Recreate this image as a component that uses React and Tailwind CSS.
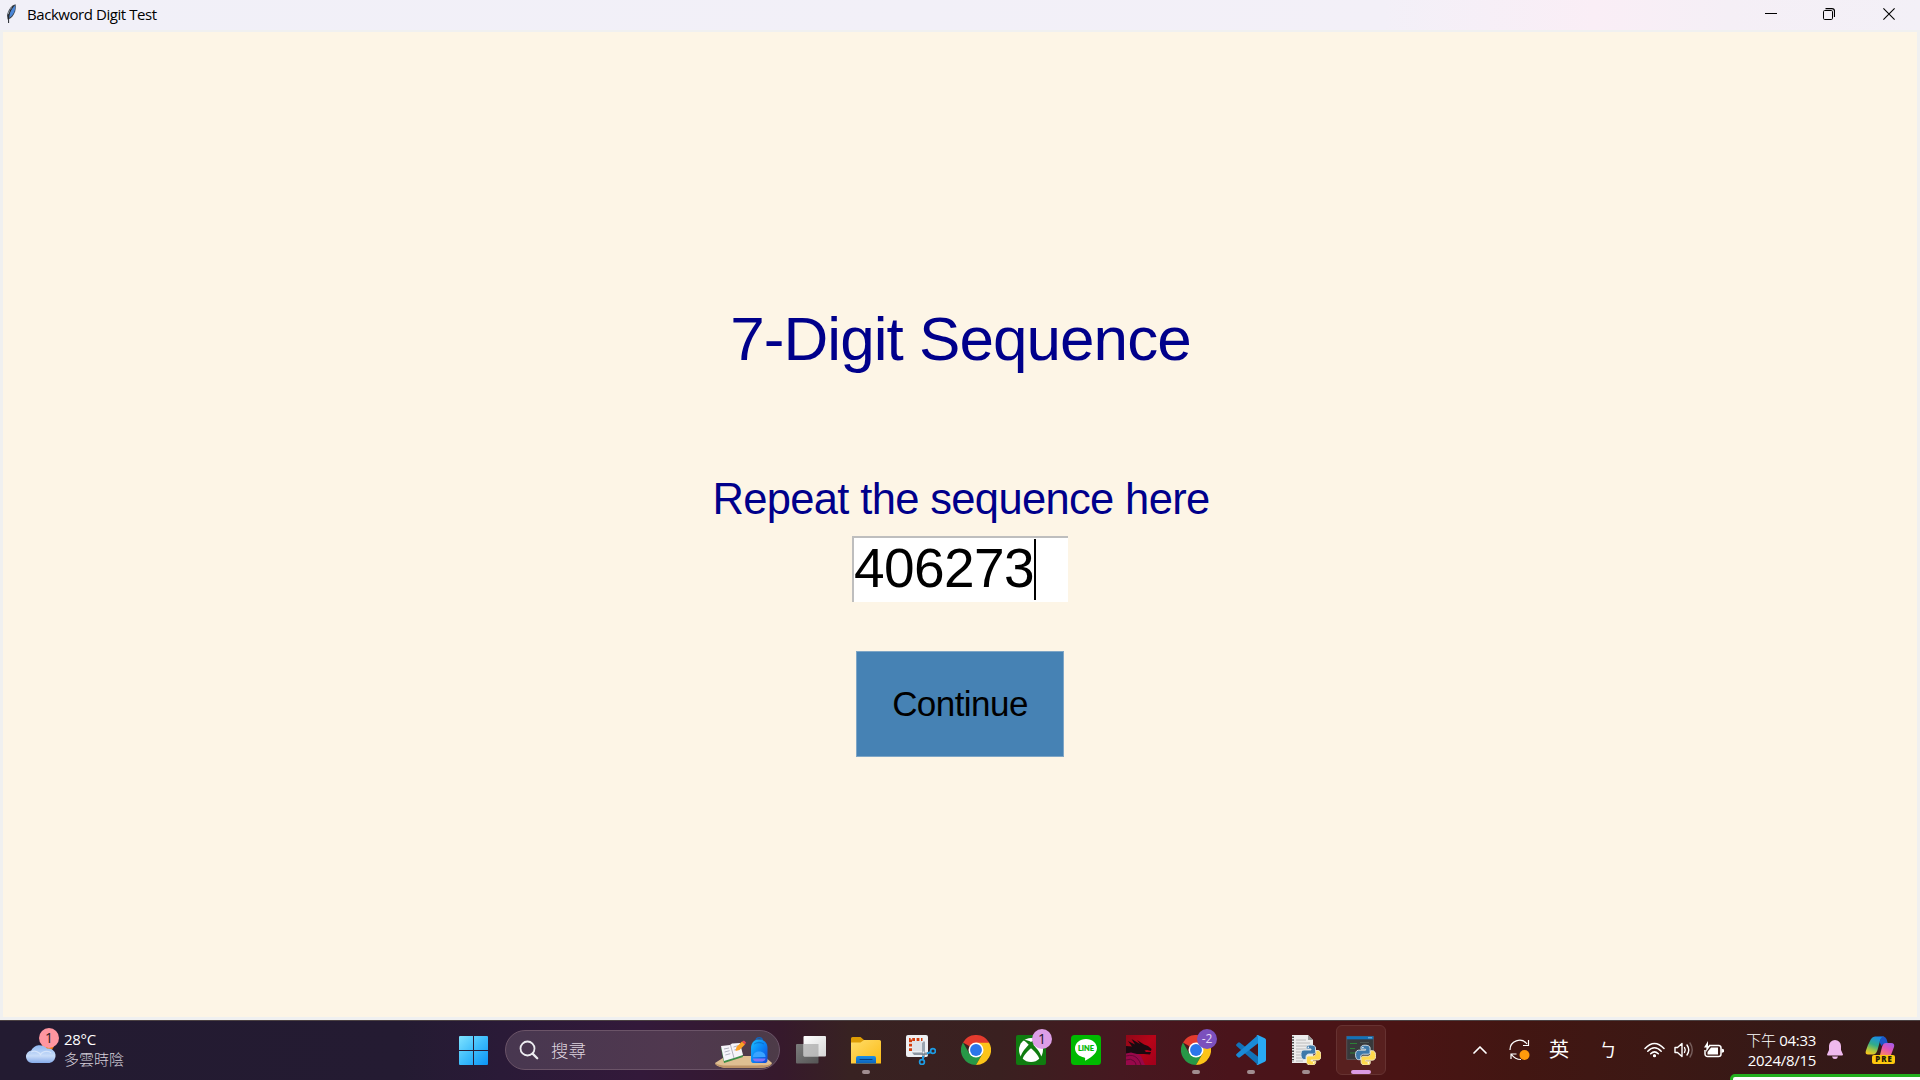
import React from "react";

function Feather() {
  return (
    <svg className="block h-5 w-[11px] shrink-0" viewBox="0 0 11 20">
      <path d="M9.6.3C6 .8 2 5.500 1 11.500L1.600 15.500 4.200 14.500C7.500 12.500 10.600 7 9.600.3Z" fill="#3a4048" />
      <path d="M9.200 1.200C6 4 3.200 9 3 14 6.800 11.500 9.600 7.500 9.200 1.200Z" fill="#4a86d8" />
      <path d="M7 2.500C4 6 2.600 9.500 2.600 14L2.600 19" fill="none" stroke="#22252a" strokeWidth="1" />
      <path d="M3.400 6.500 2.200 10M5.500 3.500 4.300 5.500" stroke="#9aa4b0" strokeWidth="1" />
    </svg>
  );
}

function TitleBar() {
  return (
    <header className="flex h-[30px] items-start bg-[linear-gradient(90deg,#f1f0f8_0%,#f2f0f8_48%,#f3f0f8_72%,#faeef6_83%,#f5eff6_90%,#f3f0f7_100%)]">
      <div className="flex h-[30px] w-[300px] pl-1.5 pt-1">
        <Feather />
        <span className="ml-2.5 whitespace-nowrap font-['Open_Sans','Noto_Sans',sans-serif] text-[15px] leading-[21px] tracking-[-0.44px] text-black">
          Backword Digit Test
        </span>
      </div>
      <div className="ml-auto flex h-7 items-center pr-[3px]">
        <div className="flex w-[58px] justify-center">
          <svg className="h-3 w-3" viewBox="0 0 12 12"><path d="M0 5.500h12" stroke="#000" /></svg>
        </div>
        <div className="flex w-[58px] justify-center">
          <svg className="h-3 w-3" viewBox="0 0 12 12" fill="none" stroke="#000">
            <rect x=".5" y="2.500" width="9" height="9" rx="1.200" />
            <path d="M2.500.6H9a2.500 2.500 0 0 1 2.500 2.500V9" strokeWidth="1.200" />
          </svg>
        </div>
        <div className="flex w-[58px] justify-center pl-1">
          <svg className="h-3 w-3" viewBox="0 0 12 12"><path d="M.4.4 11.600 11.600M11.600.4.4 11.600" stroke="#000" strokeWidth="1.100" /></svg>
        </div>
        <div className="w-[1px]" />
      </div>
    </header>
  );
}

function Cloud() {
  return (
    <svg className="h-[38px] w-9" viewBox="0 0 36 38">
      <defs>
        <linearGradient id="cl" x1="0" y1="0" x2="0" y2="1">
          <stop offset="0" stopColor="#8fb8f2" />
          <stop offset=".6" stopColor="#c9dcf8" />
          <stop offset="1" stopColor="#86abea" />
        </linearGradient>
      </defs>
      <circle cx="23" cy="18" r="6" fill="#f57c10" />
      <path d="M7 36a6.300 6.300 0 0 1-.8-12.500A9.500 9.500 0 0 1 22 21.500 7.300 7.300 0 0 1 24.500 36Z" fill="url(#cl)" />
      <path d="M6 25C10 23 14 25 15.500 27.500 18 23 25 24 26 26" fill="none" stroke="#e3edfc" strokeWidth="1.300" opacity=".7" />
      <circle cx="24" cy="11" r="10" fill="#ff96a0" />
      <text x="24" y="15.800" textAnchor="middle" fontSize="14" fontFamily="Open Sans" fill="#2b1a1e">1</text>
    </svg>
  );
}

function StartIcon() {
  return (
    <svg className="h-[29px] w-[29px]" viewBox="0 0 29 29">
      <defs>
        <linearGradient id="win" x1="0" y1="0" x2="1" y2="1">
          <stop offset="0" stopColor="#7fe3ff" />
          <stop offset=".5" stopColor="#3dbcfb" />
          <stop offset="1" stopColor="#0b93f5" />
        </linearGradient>
      </defs>
      <path fill="url(#win)" d="M1 0h13v14H0V1a1 1 0 0 1 1-1ZM15 0h13a1 1 0 0 1 1 1v13H15ZM0 15h14v14H1a1 1 0 0 1-1-1ZM15 15h14v13a1 1 0 0 1-1 1H15Z" />
    </svg>
  );
}

function SchoolArt() {
  return (
    <svg className="h-[32px] w-[58px]" viewBox="0 0 58 32">
      <defs>
        <linearGradient id="bag" x1="0" y1="0" x2="1" y2="1">
          <stop offset="0" stopColor="#1cc0ff" />
          <stop offset=".5" stopColor="#0b85f5" />
          <stop offset="1" stopColor="#1246d6" />
        </linearGradient>
      </defs>
      <path d="M0 26 11 19H49L57 26C56 29.500 50 31 43 31H14C7 31 1 29.500 0 26Z" fill="#dfbf92" />
      <path d="M0 26C4 29 10 28.500 16 28.500H42C49 28.500 54 28.500 57 26 56 29.500 50 31 43 31H14C7 31 1 29.500 0 26Z" fill="#bd9367" />
      <path d="M6 11 9 26 28 20 25 7Z" fill="#3d8e46" />
      <path d="M6 9 15 8 17 6.500 25 6 28 18 19 21 9 24Z" fill="#f6f5fa" />
      <path d="M15.500 8 19 21M9 12l5-1M9.600 15l5-1.300M10.300 18l5-1.300M18.500 10l5-1.500M19.300 13l5-1.500" stroke="#a9a9b8" strokeWidth=".9" />
      <path d="M20.500 14 21.500 10 27 4.500 30 7.500 24.500 13Z" fill="#fba024" />
      <path d="M27 4.500 29 3.500 31 5.500 30 7.500Z" fill="#ea4a52" />
      <path d="M41 4a3.200 3.200 0 0 1 6.400 0" fill="none" stroke="#1463b8" strokeWidth="1.500" />
      <path d="M36 11C36 5 40 2.500 44.200 2.500S52.500 5 52.500 11V23C52.500 25.500 51 26 49 26H39.500C37 26 36 25.500 36 23Z" fill="url(#bag)" />
      <path d="M39 6.500Q44 3 49 6.500V7.500Q44 5 39 7.500Z" fill="#074c9e" opacity=".4" />
      <path d="M38 20C38 16 41 14.500 44.200 14.500S50.500 16 50.500 20Z" fill="#3aa4ff" />
      <path d="M38 21.500H50.500C50 24 49 24.500 44 24.500S38.500 24 38 21.500Z" fill="#8472f4" />
    </svg>
  );
}

function TaskView() {
  return (
    <svg className="h-[30px] w-[30px]" viewBox="0 0 30 30">
      <defs>
        <linearGradient id="tv1" x1="0" y1="0" x2="1" y2="1"><stop stopColor="#fff" /><stop offset="1" stopColor="#d6d6d6" /></linearGradient>
        <linearGradient id="tv2" x1="0" y1="0" x2="1" y2="1"><stop stopColor="#7c7c7c" /><stop offset="1" stopColor="#555" /></linearGradient>
      </defs>
      <rect x="0" y="9" width="22.500" height="19.500" rx="1" fill="url(#tv2)" />
      <rect x="7.500" y="1" width="22.500" height="20.500" rx="1" fill="url(#tv1)" />
      <path d="M7.500 9H22.500V21.500H8.500a1 1 0 0 1-1-1Z" fill="#a8a8a8" opacity=".7" />
    </svg>
  );
}

function Explorer() {
  return (
    <svg className="h-[30px] w-[30px]" viewBox="0 0 30 30">
      <defs>
        <linearGradient id="fo" x1="0" y1="0" x2="1" y2="1"><stop stopColor="#ffdc6a" /><stop offset="1" stopColor="#fbbb14" /></linearGradient>
        <linearGradient id="fb" x1="0" y1="0" x2="0" y2="1"><stop stopColor="#1c8fe6" /><stop offset="1" stopColor="#0b62ba" /></linearGradient>
      </defs>
      <path d="M0 3.500a1.500 1.500 0 0 1 1.500-1.500H9.500L13 5V9H0Z" fill="#dd9c05" />
      <path d="M0 7.500H9.500L13 5H28.500A1.500 1.500 0 0 1 30 6.500V28.500H0Z" fill="url(#fo)" />
      <path d="M5 28.500V23a2 2 0 0 1 2-2H23a2 2 0 0 1 2 2V28.500Z" fill="url(#fb)" />
      <path d="M9 24.500H21" stroke="#063f82" strokeWidth="1.100" strokeLinecap="round" />
    </svg>
  );
}

function Snip() {
  return (
    <svg className="h-[30px] w-[30px]" viewBox="0 0 30 30">
      <rect x="0" y="0" width="22" height="22" rx="2" fill="#eef0f3" />
      <rect x="6" y="6" width="10" height="10" fill="#dfe3e8" />
      <path d="M4.500 16V4.500H16.500" fill="none" stroke="#d23c0c" strokeWidth="3" strokeDasharray="2.800 1.600" />
      <path d="M18 6 16 8V21L17 24 19 22V7Z" fill="#9ba6b1" />
      <path d="M6 17.500H23L21 20H8Z" fill="#74808c" opacity=".8" />
      <circle cx="17.500" cy="17.500" r="1" fill="#e6eaee" />
      <circle cx="27" cy="16" r="2.400" fill="none" stroke="#1d9ce5" strokeWidth="1.700" />
      <circle cx="16" cy="27" r="2.400" fill="none" stroke="#1d9ce5" strokeWidth="1.700" />
      <path d="M21 18.500 25 17M17 24V21" stroke="#1d9ce5" strokeWidth="1.900" />
    </svg>
  );
}

function Chrome() {
  return (
    <svg className="h-[30px] w-[30px]" viewBox="0 0 48 48">
      <path d="M24 24 3.200 12A24 24 0 0 1 44.800 12Z" fill="#e33b2e" />
      <path d="M3.200 12A24 24 0 0 0 24 48L34.400 30 24 24 13.600 30Z" fill="#279847" />
      <path d="M24 12H44.800A24 24 0 0 1 24 48L34.400 30Z" fill="#fcc419" />
      <path d="M24 12H44.800L42 9H24Z" fill="#e33b2e" />
      <circle cx="24" cy="24" r="12" fill="#fff" />
      <circle cx="24" cy="24" r="9.500" fill="#2b76ea" />
    </svg>
  );
}

function Xbox() {
  return (
    <svg className="h-[30px] w-[30px]" viewBox="0 0 30 30">
      <rect width="30" height="30" rx="2" fill="#107c10" />
      <circle cx="15" cy="15" r="12" fill="#fff" />
      <path d="M7.500 5.200C10 4.500 13.500 6 15 7 16.500 6 20 4.500 22.500 5.200 20.500 6.200 18.300 8.500 17.300 9.800 21 13.500 25.500 19.500 25.300 22.500L23.600 24.500C22.500 20.500 18 15.800 15 13.300 12 15.800 7.500 20.500 6.400 24.500L4.700 22.500C4.500 19.500 9 13.500 12.700 9.800 11.700 8.500 9.500 6.200 7.500 5.200Z" fill="#107c10" />
    </svg>
  );
}

function Line() {
  return (
    <svg className="h-[30px] w-[30px]" viewBox="0 0 30 30">
      <rect width="30" height="30" rx="3.500" fill="#00b900" />
      <path d="M15 4C8.900 4 4 8.200 4 13.300 4 18 8 21.700 13.300 22.500 14.800 22.800 14 24 14 25.800 17 24.500 26 19.500 26 13.300 26 8.200 21.100 4 15 4Z" fill="#fff" />
      <text x="15" y="16.300" textAnchor="middle" fontSize="7.300" fontWeight="900" fontFamily="Lato, Open Sans" textLength="16" lengthAdjust="spacingAndGlyphs" fill="#00b900" stroke="#00b900" strokeWidth=".2">LINE</text>
    </svg>
  );
}

function Dragon() {
  return (
    <svg className="h-[30px] w-[30px]" viewBox="0 0 30 30">
      <defs><linearGradient id="dr" x1="0" y1="0" x2="1" y2="1"><stop stopColor="#8f0818" /><stop offset=".5" stopColor="#b80418" /><stop offset="1" stopColor="#a0001c" /></linearGradient></defs>
      <rect width="30" height="30" fill="url(#dr)" />
      <path d="M0 17 8 16 15 21 19 30H0Z" fill="#98084a" />
      <path d="M0 11 6 11.500 2 6 9 9.500 5.500 4 14 9 11 5 18 9.500 22 11 25.500 14 25 16 21 15 18.500 15.500 20 17 25 17 24 19.500 18 19 11 19 5 17.500 0 18.500Z" fill="#1a0a10" />
      <path d="M0 21Q7 19 11 23 14 26 15 30M0 25Q5 23 8 26 10 28 10 30" fill="none" stroke="#5c0830" strokeWidth=".9" />
    </svg>
  );
}

function VSCode() {
  return (
    <svg className="h-[30px] w-[30px]" viewBox="0 0 30 30">
      <path d="M.5 9.300 2 7.800Q3 7 4 7.700L25 24 22 30 .5 11Q-.3 10 .5 9.300Z" fill="#1272b8" />
      <path d="M.5 20.700 2 22.200Q3 23 4 22.300L25 6 22 0 .5 19Q-.3 20 .5 20.700Z" fill="#1a8ad6" />
      <path d="M22.300.2 28.800 3.200Q30 3.800 30 5V25Q30 26.200 28.800 26.800L22.300 29.800Q21 30.300 20.300 29.200 22 29.500 22 28V2Q22 .5 20.300.8 21-.3 22.300.2Z" fill="#29a9f3" />
    </svg>
  );
}

function PythonMark({ x, y }) {
  return (
    <g transform={`translate(${x} ${y})`}>
      <path d="M9.500 0C5 0 5.300 2 5.300 4H10V5H3C.5 5-.3 7.500 0 10.500.2 13 1.500 14.500 3 14.500H5V12C5 10 6.500 9 8 9H12.500C14 9 14.500 8 14.500 6.500V3C14.500.8 12.500 0 9.500 0Z" fill="#3e79aa" stroke="#dfe6ec" strokeWidth=".9" />
      <path d="M10.500 20C15 20 14.700 18 14.700 16H10V15H17C19.500 15 20.300 12.500 20 9.500 19.800 7 18.500 5.500 17 5.500H15V8C15 10 13.500 11 12 11H7.500C6 11 5.500 12 5.500 13.500V17C5.500 19.200 7.500 20 10.500 20Z" fill="#ffd94c" stroke="#f5eed0" strokeWidth=".9" />
      <circle cx="7.300" cy="2.300" r=".8" fill="#fff" />
      <circle cx="12.700" cy="17.700" r=".8" fill="#fff" />
    </g>
  );
}

function PyFile() {
  return (
    <svg className="h-[30px] w-[30px]" viewBox="0 0 30 30">
      <path d="M1 0H17L22 5V28H1Z" fill="#ececec" />
      <path d="M17 0V5H22Z" fill="#9c9c9c" />
      <path d="M2 1.500V27" stroke="#4b4b4b" strokeWidth="2" strokeDasharray="1.400 1.400" />
      <path d="M5 5H15M5 8H19M5 11H19M5 14H17M5 17H12M5 20H11M5 23H12M5 26H12" stroke="#b7b7b7" strokeWidth=".9" />
      <PythonMark x="10" y="10" />
    </svg>
  );
}

function PyConsole() {
  return (
    <svg className="h-[30px] w-[30px]" viewBox="0 0 30 30">
      <rect x=".8" y="1.300" width="26.500" height="23" fill="#38393b" stroke="#5c6268" strokeWidth=".7" />
      <rect x=".8" y="1.300" width="26.500" height="3" fill="#1371b8" />
      <path d="M22 2.800h4" stroke="#a9d0ee" strokeWidth=".8" />
      <path d="M4 8.500H11M4 13.500H9M4 18H9" stroke="#2c8137" strokeWidth="1.100" />
      <path d="M14 7.500H23" stroke="#4e5652" strokeWidth="1" />
      <PythonMark x="9.600" y="10.200" />
    </svg>
  );
}

function TaskButton({ children, dot, active, badge }) {
  return (
    <div className="flex h-[60px] w-[55px] items-center justify-center">
      <div className={active ? "relative flex h-[50px] w-[50px] items-center justify-center rounded-md border border-[#663231] bg-[#58201f]" : "relative flex h-[50px] w-[50px] items-center justify-center"}>
        {children}
        {badge}
        {dot && <div className="absolute bottom-[1px] left-[21px] h-1 w-2 rounded-full bg-[#a18d90]" />}
        {active && <div className="absolute bottom-0 left-[14px] h-1 w-5 rounded-full bg-[#dc9be4]" />}
      </div>
    </div>
  );
}

function Badge({ children, violet }) {
  return (
    <div className={violet
      ? "absolute left-[26px] top-1 flex h-5 w-5 items-center justify-center rounded-full bg-[#7b50bd] font-['Open_Sans',sans-serif] text-[12px] leading-none text-[#e5d8f6]"
      : "absolute left-[26px] top-1 flex h-5 w-5 items-center justify-center rounded-full bg-[#dc9ee6] font-['Open_Sans',sans-serif] text-[14px] leading-none text-[#241628]"}>
      {children}
    </div>
  );
}

function Tray() {
  return (
    <div className="ml-auto flex h-[60px] w-[450px] items-center font-['Open_Sans','Noto_Sans_CJK_TC',sans-serif] text-white">
      <svg className="ml-[3px] h-4 w-[14px]" viewBox="0 0 14 16"><path d="M1 11 7 5 13 11" fill="none" stroke="#fff" strokeWidth="1.700" strokeLinecap="round" strokeLinejoin="round" /></svg>
      <svg className="ml-[22px] h-[22px] w-[22px]" viewBox="0 0 22 22">
        <path d="M1 11A9.500 9.500 0 0 1 18 5M19.500 1V6.500H14M2 20V15H7.500M2.500 15.500Q6 20.500 12 20.500" fill="none" stroke="#fff" strokeWidth="1.200" />
        <circle cx="15.500" cy="16" r="5" fill="#ff9a0c" />
      </svg>
      <span className="ml-[18px] w-5 text-[20px] leading-5">英</span>
      <span className="ml-[30px] w-[18px] text-[18px] leading-5">ㄅ</span>
      <svg className="ml-[27px] h-5 w-[21px]" viewBox="0 0 21 20" fill="none" stroke="#fff" strokeWidth="1.500" strokeLinecap="round">
        <path d="M1 8.500Q10.500-1.500 20 8.500M3.800 11.200Q10.500 4.200 17.200 11.200M6.700 13.800Q10.500 10 14.300 13.800" />
        <circle cx="10.500" cy="15.800" r="1.300" fill="#fff" stroke="none" />
        <circle cx="10.500" cy="15.800" r=".8" fill="#fff" />
      </svg>
      <svg className="ml-[9px] h-5 w-5" viewBox="0 0 20 20" fill="none" stroke="#fff" strokeWidth="1.400" strokeLinejoin="round" strokeLinecap="round">
        <path d="M1 7.500H3.500L8 3.500V16.500L3.500 12.500H1Z" /><path d="M10.500 7.500Q12 10 10.500 12.500M13 5Q16.500 10 13 15" />
        <path d="M16 3Q20.500 10 16 17" opacity=".3" />
      </svg>
      <svg className="ml-[10px] h-[18px] w-5" viewBox="0 0 20 18">
        <path d="M5 4.500H15A2.500 2.500 0 0 1 17 7V13A2.500 2.500 0 0 1 14.500 15.500H3.500A2.500 2.500 0 0 1 1 13V9" fill="none" stroke="#fff" strokeWidth="1.500" />
        <path d="M7 6.500H14V13.500H3.500V11Z" fill="#fff" /><path d="M17.500 7.500 20 8.500V11L17.500 12Z" fill="#fff" />
        <path d="M4 0 0 6.500H2.500L2 11 6.500 4.800H4Z" fill="#fff" />
      </svg>
      <div className="ml-[10px] w-[82px] whitespace-nowrap text-right text-[15px] leading-5 tracking-[-0.3px]">
        <div><span className="font-light">下午</span> 04:33</div>
        <div>2024/8/15</div>
      </div>
      <svg className="ml-[11px] h-5 w-4" viewBox="0 0 16 20">
        <path d="M8 0A6 6 0 0 0 2 6V10L0 14.500Q0 15.500 1 15.500H15Q16 15.500 16 14.500L14 10V6A6 6 0 0 0 8 0Z" fill="#efb9ee" />
        <path d="M5 16.500H11Q10.500 19 8 19T5 16.500Z" fill="#efb9ee" />
      </svg>
      <svg className="ml-[22px] h-[30px] w-[30px]" viewBox="0 0 30 30">
        <defs>
          <linearGradient id="c1" x1=".6" y1="0" x2=".2" y2="1"><stop stopColor="#198de8" /><stop offset=".45" stopColor="#32ac8a" /><stop offset=".75" stopColor="#a8c640" /><stop offset="1" stopColor="#f8c61c" /></linearGradient>
          <linearGradient id="c2" x1=".8" y1="0" x2=".2" y2="1"><stop stopColor="#a45de9" /><stop offset=".5" stopColor="#e254b4" /><stop offset="1" stopColor="#fb8366" /></linearGradient>
        </defs>
        <path d="M6 4Q7.500 1.500 10 1.500H19.500Q16 2.500 15 6L12.500 15Q11 19.500 8 19.500H3Q0 19.500 .8 16Q3 9 6 4Z" fill="url(#c1)" />
        <path d="M12 1.500H18Q20.500 1.500 21.500 4L23 9H19Q17.500 9 16.500 11L14.500 7Q15.500 3 17 2Z" fill="#1b56c9" />
        <path d="M17 12Q18 8 21 8H26Q30 8 29 12L26 20H15Z" fill="url(#c2)" />
        <rect x="7" y="20" width="23" height="9" rx="2" fill="#fdc80e" />
        <text x="18.500" y="27.400" textAnchor="middle" fontSize="7.800" fontWeight="800" fontFamily="Open Sans" textLength="16.500" fill="#231a08">PRE</text>
      </svg>
    </div>
  );
}

function Taskbar() {
  return (
    <footer className="relative flex h-[60px] overflow-hidden bg-[linear-gradient(90deg,#231b31_0px,#241b32_400px,#2a1a37_500px,#33193a_640px,#36192c_780px,#382222_850px,#3a2020_1000px,#461820_1120px,#4a141b_1230px,#4a1414_1400px,#421612_1520px,#3c1814_1660px,#351917_1800px,#331818_1920px)] shadow-[inset_0_1px_0_#4b4142]">
      <div className="flex w-[459px]">
        <div className="ml-[25px] mt-[7px] h-[38px] w-9"><Cloud /></div>
        <div className="ml-[3px] mt-[9px] font-['Open_Sans','Noto_Sans_CJK_TC',sans-serif] text-[15px] leading-5 tracking-[-0.3px] text-white">
          <div>28°C</div>
          <div className="font-light tracking-normal text-[#d5d0da]">多雲時陰</div>
        </div>
      </div>
      <div className="mt-4 h-[29px] w-[29px]"><StartIcon /></div>
      <div className="ml-[17px] mt-2.5 flex h-10 w-[275px] items-center rounded-full border border-[#6b5468] bg-[linear-gradient(90deg,#483750,#50384f_60%,#4d3b48)]">
        <svg className="ml-[13px] h-5 w-5" viewBox="0 0 20 20" fill="none" stroke="#ececf0" strokeLinecap="round"><circle cx="8.500" cy="8.500" r="7" strokeWidth="1.800" /><path d="M13.600 13.600 18.200 18.200" strokeWidth="2.300" /></svg>
        <span className="-mt-px ml-3 font-['Noto_Sans_CJK_TC',sans-serif] text-[17.500px] font-light leading-5 text-[#ddd3df]">搜尋</span>
        <div className="ml-auto mr-1.5 mt-1.5"><SchoolArt /></div>
      </div>
      <div className="ml-[3.500px] flex">
        <TaskButton><TaskView /></TaskButton>
        <TaskButton dot><Explorer /></TaskButton>
        <TaskButton><Snip /></TaskButton>
        <TaskButton><Chrome /></TaskButton>
        <TaskButton badge={<Badge>1</Badge>}><Xbox /></TaskButton>
        <TaskButton><Line /></TaskButton>
        <TaskButton><Dragon /></TaskButton>
        <TaskButton dot badge={<Badge violet>-2</Badge>}><Chrome /></TaskButton>
        <TaskButton dot><VSCode /></TaskButton>
        <TaskButton dot><PyFile /></TaskButton>
        <TaskButton active><PyConsole /></TaskButton>
      </div>
      <Tray />
      <div className="absolute left-[1730px] top-[54px] h-5 w-[210px] rounded-tl-[5px] border-[3px] border-[#22b01e] bg-white" />
    </footer>
  );
}

export default function App() {
  return (
    <div className="flex h-[1080px] w-[1920px] flex-col overflow-hidden bg-[#f0f0f0]">
      <TitleBar />
      <main className="mx-[3px] mb-[3px] mt-[2px] flex h-[985px] flex-col items-center bg-[#fdf5e6] font-['Liberation_Sans',sans-serif]">
        <h1 className="mt-[273px] whitespace-nowrap pl-px text-[62px] leading-[68px] tracking-[-0.95px] text-[#00008b]">7-Digit Sequence</h1>
        <p className="mt-[102px] whitespace-nowrap pl-[2px] text-[43.500px] leading-[48px] tracking-[-0.65px] text-[#00008b]">Repeat the sequence here</p>
        <div className="mt-[13px] flex h-[66px] w-[216px] border-l-2 border-t-2 border-[#bebebe] bg-white">
          <span className="whitespace-nowrap text-[55px] leading-[60px] tracking-[-0.58px] text-black">406273</span>
          <span className="mt-[1px] h-[61px] w-[2px] bg-black" />
        </div>
        <button className="mt-[49px] h-[105.500px] w-[208px] border border-[#7fa6c6] bg-[#4682b4] text-[35px] leading-10 tracking-[-0.55px] text-black">Continue</button>
      </main>
      <Taskbar />
    </div>
  );
}
